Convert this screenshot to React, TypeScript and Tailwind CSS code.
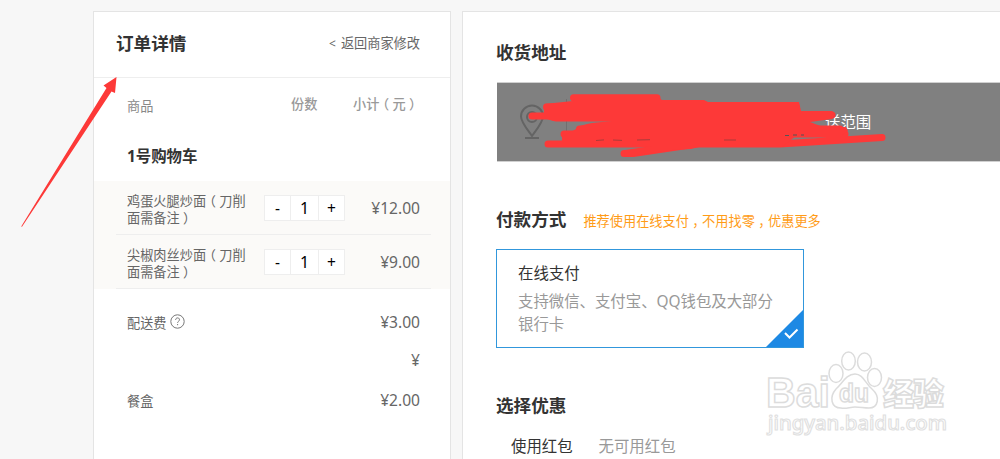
const items = [
  { name: "鸡蛋火腿炒面", count: 1, price: "¥12.00" },
  { name: "尖椒肉丝炒面", count: 1, price: "¥9.00" },
];

const SectionTitle = ({ children }: { children: string }) => (
  <h2 className="text-[17.6px] leading-6 font-bold text-[#333]">{children}</h2>
);

// full-width punctuation, set half-width and centred in its cell
const Punct = ({ children }: { children: string }) => (
  <span className="px-[3.3px] [font-feature-settings:'halt']">{children}</span>
);

const Quantity = ({ count }: { count: number }) => (
  <div className="flex w-[81px] h-[26px] border border-[#eee] bg-white text-black text-[15.5px] leading-[25px] text-center">
    <span className="w-[25px]">-</span>
    <span className="flex-1 border-x border-[#eee] text-[16px]">{count}</span>
    <span className="w-[25px]">+</span>
  </div>
);

const OrderDetails = () => (
  <section className="w-[358px] h-[460px] shrink-0 border border-[#e4e4e4] bg-white text-[#666]">
    <div className="h-[66px] pl-[22px] pr-[30px] pb-[3px] flex items-center justify-between border-b border-[#eee]">
      <SectionTitle>订单详情</SectionTitle>
      <span className="pt-[2px] text-[13.2px]">
        <span className="mr-[5px] text-[12px]">&lt;</span>返回商家修改
      </span>
    </div>

    <div className="h-[54px] pl-[33px] pr-[30px] flex items-center text-[13.2px] text-[#999]">
      <span className="w-[164px] pt-[3px] text-[#888]">商品</span>
      <span className="w-[62px] font-medium">份数</span>
      <span className="font-medium whitespace-nowrap">小计<Punct>（</Punct>元<Punct>）</Punct></span>
    </div>
    <div className="h-[49px] pl-[33px] pt-px flex items-center text-[15.4px] font-bold text-[#333]">1号购物车</div>

    <div className="bg-[#fbfaf8]">
      {items.map((item) => (
        <div key={item.name} className="h-[54px] ml-[22px] mr-[19px] pl-[11px] pr-[11px] flex items-center border-b border-[#eee]">
          <span className="w-[137px] pr-[17px] pt-[4px] text-[13.2px] leading-[17px]">
            {item.name}<Punct>（</Punct>刀削面需备注<Punct>）</Punct>
          </span>
          <Quantity count={item.count} />
          <span className="ml-auto pt-[2px] text-[15.6px]">{item.price}</span>
        </div>
      ))}
    </div>

    <div className="pl-[33px] pr-[30px] pt-[13px] text-[13.2px]">
      <div className="h-10 flex items-center justify-between">
        <span className="flex items-center gap-[3px] pt-[3px]">
          配送费
          <svg className="size-[15px] -mt-[3px]" viewBox="0 0 15 15" fill="none" stroke="#777">
            <circle cx="7.5" cy="7.5" r="6.7" />
            <path d="M5.6 5.9c.1-2.8 4-2.6 3.9-.1 0 1.4-1.9 1.5-1.9 3M7.6 10v1.2" />
          </svg>
        </span>
        <span className="pt-px text-[15.6px]">¥3.00</span>
      </div>
      <div className="h-[38px] flex items-center justify-end text-[15.6px]">¥</div>
      <div className="h-10 flex items-center justify-between">
        <span className="pt-[3px]">餐盒</span>
        <span className="pt-[2px] text-[15.6px]">¥2.00</span>
      </div>
    </div>
  </section>
);

const Address = () => (
  <div className="relative ml-px mt-[18px] h-[80px] bg-[#808080] border-y border-[#d0d0d0] flex items-center">
    <svg className="ml-[22px] w-[26px] h-[36px]" viewBox="0 0 26 36" fill="none" stroke="#646464" strokeWidth="2">
      <path d="M13 32C8 25 2 18 2 12.500a11 11 0 0 1 22 0C24 18 18 25 13 32ZM6 34h14" />
      <circle cx="13" cy="13" r="5" />
    </svg>
    <span className="ml-[280px] pt-px text-[15.4px] text-white">送范围</span>
    <svg className="absolute left-0 -top-px w-[503px] h-[80px]" viewBox="497 82 503 80">
      <path d="M566.500 99v34" stroke="#707070" />
      <g fill="none" stroke="#fd3938" strokeLinecap="round" strokeLinejoin="round" strokeWidth="7">
        <path d="M573.500 97.800H657M532 116h25M546.500 107h250M556 118h110M579.500 129H840M564 134H845M548 144H780L882 137.500M624 153.500h9L690 145M820 115H832" />
      </g>
      <path
        fill="#fd3938"
        d="M575 98H659L662 100H704L708 102H799L801 111H832Q837 115 832 119L810 122L823 127H846L848 131L842 135H797L782 147H699L691 149L672 150L624 157L625 150L652 146H562V137L576 129Q579 125 592 123L612 121H553L544 118V104L573 101Z"
      />
      <path d="M596 140.500l8-.6M613 140l9 .4M637 140l13-.3M724 140h12" stroke="#a93c3b" />
      <path d="M785 135.500h4M793 135h4M801 135h3" stroke="#555" />
    </svg>
  </div>
);

const Checkout = () => (
  <section className="ml-[11px] pl-[33px] pt-[28px] w-[538px] h-[460px] shrink-0 border-l border-t border-[#e4e4e4] bg-white">
    <SectionTitle>收货地址</SectionTitle>
    <Address />

    <div className="mt-[45px] flex items-center gap-[17px]">
      <SectionTitle>付款方式</SectionTitle>
      <span className="pt-[3px] text-[13.2px] leading-5 text-[#ff9c17]">
        推荐使用在线支付<Punct>，</Punct>不用找零<Punct>，</Punct>优惠更多
      </span>
    </div>
    <div className="relative mt-[18px] w-[308px] h-[99px] border border-[#3197dc] pl-[21px] pr-6 pt-[13px] text-[15.4px]">
      <p className="leading-[22px] text-[#333]">在线支付</p>
      <p className="mt-[5px] leading-[23px] text-[#999]">支持微信、支付宝、QQ钱包及大部分银行卡</p>
      <svg className="absolute right-0 bottom-0 size-[37px]" viewBox="0 0 37 37" fill="none">
        <path d="M37 0v37H0Z" fill="#1d89e4" />
        <path d="m19 23 4.500 4.500 8-8" stroke="#fff" strokeWidth="2" />
      </svg>
    </div>

    <div className="mt-[45px]">
      <SectionTitle>选择优惠</SectionTitle>
    </div>
    <div className="mt-[18px] ml-[15px] flex gap-[26px] text-[15.4px] leading-6">
      <span className="text-[#333]">使用红包</span>
      <span className="text-[#999]">无可用红包</span>
    </div>
  </section>
);

const Watermark = () => (
  <svg className="absolute left-[760px] top-[345px] w-[200px] h-[96px]" viewBox="760 345 200 96" fill="#fff" stroke="#dcdcdc" strokeWidth="1.5">
    <g fontWeight="bold" fontFamily="'Liberation Sans', sans-serif">
      <text x="766" y="407" fontSize="42" textLength="64" lengthAdjust="spacingAndGlyphs">Bai</text>
      <ellipse cx="836" cy="373.500" rx="7" ry="9" />
      <ellipse cx="848.500" cy="361" rx="6.800" ry="9" />
      <ellipse cx="864.500" cy="362" rx="7" ry="9" />
      <ellipse cx="874.500" cy="377.500" rx="7" ry="9" />
      <path d="M855 374c8 0 10 9 17 15 9 8 6 19-3 19-5 0-9-1-14-1s-9 2-14 1c-10 0-12-11-5-19 6-5 10-15 19-15Z" />
      <text x="839" y="402" fontSize="25" textLength="30" lengthAdjust="spacingAndGlyphs">du</text>
    </g>
    <text x="883" y="405" fontSize="31" fontWeight="900" textLength="61">经验</text>
    <text x="768" y="430" fontSize="20" fontWeight="500" stroke="#e0e0e0" strokeWidth="1.1" textLength="179" lengthAdjust="spacingAndGlyphs" fontFamily="'Noto Sans', sans-serif">jingyan.baidu.com</text>
  </svg>
);

export default function App() {
  return (
    <div className="relative h-[459px] w-[1000px] overflow-hidden bg-[#f7f7f7] pt-[11px] pl-[93px] flex items-start font-['Noto_Sans','Noto_Sans_CJK_SC',sans-serif]">
      <OrderDetails />
      <Checkout />
      <Watermark />
      {/* arrow pointing at the order header */}
      <svg className="absolute left-[20px] top-[75px] w-[100px] h-[154px]" viewBox="20 75 100 154">
        <path d="M116.500 77 103.500 85.500 106.500 88 21.200 226.500 22 226.800 111.500 91.500 115 93Z" fill="#fd3938" />
      </svg>
    </div>
  );
}
